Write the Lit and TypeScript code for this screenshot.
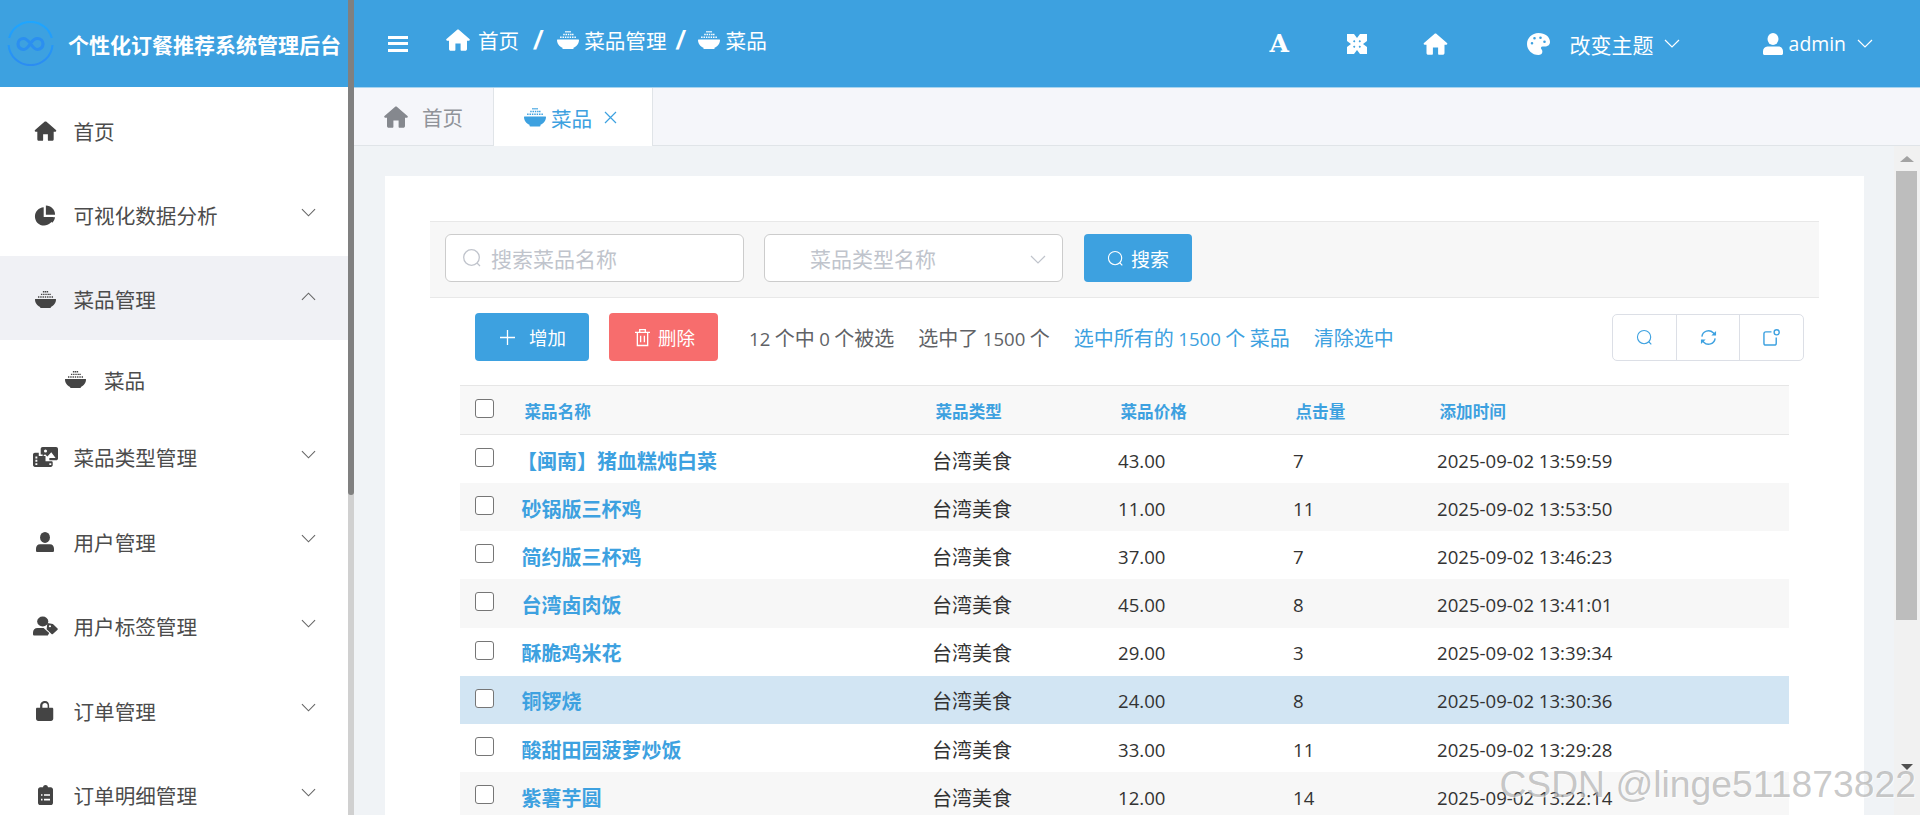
import { LitElement, html, css } from "lit";
import { customElement } from "lit/decorators.js";

const chevron = (up = false) => html`<svg class="chev" viewBox="0 0 16 9" fill="none" stroke="currentColor" stroke-width="1.2"><path d=${up ? "M1 8L8 1l7 7" : "M1 1l7 7 7-7"}/></svg>`;
const home = () => html`<svg class="ic" viewBox="0 0 24 22" fill="currentColor"><path d="M12 .5c.4 0 .8.2 1.100.4L23.500 10c.7.7.3 1.700-.6 1.700H21v8.300c0 1-.8 1.800-1.800 1.800h-3.600c-.6 0-1-.4-1-1v-6.300H9.400v6.300c0 .6-.4 1-1 1H4.800c-1 0-1.800-.8-1.800-1.800v-8.300H1.100c-.9 0-1.300-1-.6-1.700L10.900.9c.3-.2.700-.4 1.100-.4z"/></svg>`;
const bowl = () => html`<svg class="ic" viewBox="0 0 24 20" fill="currentColor">
  <path d="M9 0h1.600v1.600H9zM11.200 0h1.600v1.600h-1.600zM13.400 0h1.600v1.600h-1.600zM6.800 3h1.600v1.600H6.800zM9.300 3h1.600v1.600H9.300zM11.800 3h1.600v1.600h-1.600zM14.300 3h1.600v1.600h-1.600zM16.400 3H18v1.600h-1.600zM3.400 6H5v1.600H3.400zM6 6h1.600v1.600H6zM8.600 6h1.600v1.600H8.600zM11.200 6h1.600v1.600h-1.600zM13.800 6h1.600v1.600h-1.600zM16.400 6H18v1.600h-1.600zM19 6h1.600v1.600H19z"/>
  <path d="M.5 9.200h23c.3 0 .5.200.5.500 0 4-2.600 7.200-6 8.500v.8c0 .6-.4 1-1 1H7c-.6 0-1-.4-1-1v-.8C2.600 16.900 0 13.700 0 9.700c0-.3.200-.5.500-.5z"/></svg>`;
const pie = () => html`<svg class="ic" viewBox="0 0 24 24" fill="currentColor"><path d="M10.500 2.500v11.300h11.200C21 19.500 16.500 23.500 11 23.500 5 23.500.5 18.800.5 13 .5 7.500 4.700 3 10.500 2.500z"/><path d="M13 .5c5.800 0 10.500 4.700 10.500 10.500H13z"/><path d="M14 14h9.500c-.4 2.500-1.500 4.600-3.200 6.300z"/></svg>`;
const gallery = () => html`<svg class="ic" viewBox="0 0 26 21" preserveAspectRatio="none" fill="currentColor"><path fill-rule="evenodd" d="M10 0h14c1.100 0 2 .9 2 2v10c0 1.100-.9 2-2 2h-7v-2.500h6.500L19 5.500l-4 4.500-2.500-2.500L10 10V8H8V2c0-1.100.9-2 2-2zm3 2.500a1.600 1.600 0 1 0 0 3.200 1.600 1.600 0 0 0 0-3.200z"/><path fill-rule="evenodd" d="M2 6h4v3.500h7V15h6c1 0 1.500.6 1.500 1.300V19c0 1.100-.9 2-2 2H2c-1.100 0-2-.9-2-2V8c0-1.100.9-2 2-2zm.500 4v2h2v-2zm0 3.500v2h2v-2zm0 3.500v2h2v-2zm14.500 0v2h2v-2z"/></svg>`;
const user = () => html`<svg class="ic" viewBox="0 0 20 22" preserveAspectRatio="none" fill="currentColor"><ellipse cx="10" cy="6" rx="5.500" ry="6"/><path d="M4.500 13.500h11c2.800 0 4.500 2.200 4.500 4.800v2.200c0 .9-.7 1.500-1.500 1.500h-17C.7 22 0 21.400 0 20.500v-2.200c0-2.600 1.700-4.800 4.500-4.800z"/></svg>`;
const userTag = () => html`<svg class="ic" viewBox="0 0 27 24" preserveAspectRatio="none" fill="currentColor"><circle cx="10.500" cy="6.500" r="6"/><path d="M5 14.500h6.500l3.500 3.500 2.500 2.500-1.500 3H1.500C.6 23.500 0 23 0 22v-2c0-3 2-5.500 5-5.500z"/><path fill-rule="evenodd" d="M15.500 8.500l6 1 5 5.500c.5.500.5 1 0 1.500l-5 5c-.5.500-1 .5-1.500 0l-5.300-5.500zm2.800 2.500a1.200 1.200 0 1 0 0 2.400 1.200 1.200 0 0 0 0-2.400z"/></svg>`;
const bag = () => html`<svg class="ic" viewBox="0 0 24 24" preserveAspectRatio="none" fill="currentColor"><path fill-rule="evenodd" d="M12 0c3.500 0 5.500 2.400 5.500 5.500V8h4c1 0 1.500.7 1.500 1.500V21c0 1.700-1.300 3-3 3H3c-1.700 0-3-1.300-3-3V9.500C0 8.700.5 8 1.500 8h4V5.500C5.500 2.400 8.500 0 12 0zm0 2.500c-2 0-3.500 1.300-3.500 3V8h7V5.500c0-1.700-1.500-3-3.500-3z"/></svg>`;
const clip = () => html`<svg class="ic" viewBox="0 0 20 26" preserveAspectRatio="none" fill="currentColor"><path fill-rule="evenodd" d="M10 0c1.700 0 3 1.100 3.300 3H17c1.700 0 3 1.300 3 3v17c0 1.700-1.300 3-3 3H3c-1.700 0-3-1.300-3-3V6c0-1.700 1.300-3 3-3h3.700C7 1.100 8.300 0 10 0zM4 12v2h2v-2zm4 0v2h8v-2zM4 18v2h2v-2zm4 0v2h8v-2z"/></svg>`;
const search = (cls = "ic") => html`<svg class=${cls} viewBox="0 0 20 20" fill="none" stroke="currentColor" stroke-width="1.300"><circle cx="9.500" cy="9.500" r="7.800"/><path d="M15 15l3 3"/></svg>`;

const MENU = [
  { icon: home, size: "s-home", label: "首页", arrow: false },
  { icon: pie, size: "s-pie", label: "可视化数据分析", arrow: true },
  { icon: bowl, size: "s-bowl", label: "菜品管理", arrow: true, open: true },
  { icon: gallery, size: "s-gal", label: "菜品类型管理", arrow: true },
  { icon: user, size: "s-user", label: "用户管理", arrow: true },
  { icon: userTag, size: "s-tag", label: "用户标签管理", arrow: true },
  { icon: bag, size: "s-bag", label: "订单管理", arrow: true },
  { icon: clip, size: "s-clip", label: "订单明细管理", arrow: true },
];

const ROWS = [
  ["【闽南】猪血糕炖白菜", "43.00", "7", "13:59:59"],
  ["砂锅版三杯鸡", "11.00", "11", "13:53:50"],
  ["简约版三杯鸡", "37.00", "7", "13:46:23"],
  ["台湾卤肉饭", "45.00", "8", "13:41:01"],
  ["酥脆鸡米花", "29.00", "3", "13:39:34"],
  ["铜锣烧", "24.00", "8", "13:30:36"],
  ["酸甜田园菠萝炒饭", "33.00", "11", "13:29:28"],
  ["紫薯芋圆", "12.00", "14", "13:22:14"],
];

@customElement("app-root")
export class AppRoot extends LitElement {
  static styles = css`
    :host { display: flex; position: relative; width: 1920px; height: 815px; overflow: hidden; background: #fff;
      font-family: "Noto Sans CJK SC", "Open Sans", sans-serif; color: #333; }
    * { box-sizing: border-box; }
    svg { display: block; flex: none; }
    .ic { width: 100%; height: 100%; }
    .chev { width: 15px; height: 9px; }
    .n { font-family: "Open Sans", "Noto Sans CJK SC", sans-serif; font-size: 18.6px; }

    .side { width: 354px; flex: none; display: flex; }
    .side-main { width: 348px; flex: none; display: flex; flex-direction: column; }
    .side-bar { width: 6px; flex: none; background: #d0d0d0; }
    .side-thumb { height: 495px; background: #808080; border-radius: 0 0 3px 3px; }
    .logo { height: 87px; flex: none; background: #3da1e0; display: flex; align-items: center; padding-left: 7px; }
    .logo svg { width: 47px; height: 45px; }
    .logo span { margin-left: 14px; color: #fff; font-weight: 700; font-size: 21px; white-space: nowrap; }
    .item { height: 84.4px; flex: none; display: flex; align-items: center; padding: 3px 32px 0 33px; font-size: 20.6px; color: #4c4c4c; }
    .item.open { background: #f0f1f5; }
    .item .i { width: 24px; height: 24px; flex: none; display: flex; align-items: center; justify-content: center; color: #444; margin-right: 16.5px; }
    .item .i .ic { flex: none; }
    .s-home .ic { width: 23px; height: 20px; }
    .s-pie .ic { width: 22px; height: 21px; }
    .s-bowl .ic { width: 21px; height: 17.5px; }
    .s-gal .ic { width: 25px; height: 20px; }
    .s-user .ic { width: 18px; height: 20px; }
    .s-tag .ic { width: 25px; height: 20px; }
    .s-bag .ic { width: 18px; height: 20px; }
    .s-clip .ic { width: 15px; height: 20px; }
    .item .lab { flex: 1; }
    .item .chev { color: #666; margin-bottom: 6px; }
    .sub { height: 73.6px; flex: none; display: flex; align-items: center; padding: 5.5px 0 0 65px; font-size: 20.6px; color: #4c4c4c; }
    .sub .i { width: 21px; height: 17.5px; color: #444; margin-right: 18px; }

    .main { flex: 1; min-width: 0; display: flex; flex-direction: column; }
    .top { height: 87px; flex: none; background: #3da1e0; color: #fff; display: flex; align-items: center; padding-left: 34px; }
    .burger { width: 20px; height: 16px; border-top: 3px solid #fff; border-bottom: 3px solid #fff; display: flex; align-items: center; }
    .burger i { display: block; width: 100%; height: 3px; background: #fff; }
    .crumbs { display: flex; align-items: center; margin-left: 38px; padding-bottom: 7px; font-size: 20.6px; }
    .crumbs .h { width: 24px; height: 22px; margin-right: 8px; }
    .crumbs .b { width: 22px; height: 18.500px; margin-right: 5px; }
    .crumbs .b.b2 { margin-right: 6px; }
    .crumbs .s { font: italic 700 26px "Liberation Sans", sans-serif; margin: 0 14px 0 13px; width: 11px; text-align: center; }
    .crumbs .s.s2 { margin: 0 12px 0 8px; }
    .tools { margin-left: auto; padding-right: 47px; display: flex; align-items: center; font-size: 20px; }
    .tA { font: 700 25px "DejaVu Serif", serif; width: 19px; display: flex; justify-content: center; }
    .t1 { width: 20px; height: 20px; margin-left: 58px; }
    .t2 { width: 25px; height: 22px; margin-left: 56px; }
    .t3 { width: 23px; height: 22px; margin-left: 79px; margin-right: 20px; }
    .ttext { font-size: 21px; margin-right: 10px; white-space: nowrap; }
    .t4 { width: 20px; height: 22px; margin-left: 83px; margin-right: 6px; }
    .adm { font: 19.4px "Open Sans", sans-serif; margin-right: 11px; }
    .tools .chev { width: 16px; }

    .tabs { height: 59px; flex: none; background: #f5f6fa; border-top: 1px solid #a8d4ef; border-bottom: 1px solid #e0e4e8; display: flex; }
    .tab { display: flex; align-items: center; font-size: 20.6px; white-space: nowrap; }
    .tab span { padding-top: 1px; }
    .tab.t-home { width: 140px; padding-left: 30px; color: #909399; border-right: 1px solid #e0e4e8; }
    .tab.t-home .h { width: 24px; height: 22px; margin-right: 14px; color: #85888e; }
    .tab.t-act { width: 159px; height: 59px; padding-left: 30px; background: #fff; color: #3da1e0; border-right: 1px solid #e0e4e8; }
    .tab.t-act .b { width: 22px; height: 18.500px; margin-right: 5px; }
    .tab.t-act .x { width: 13px; height: 13px; margin-left: 12px; }

    .body { flex: 1; min-height: 0; display: flex; background: #f0f3f6; overflow: hidden; }
    .scroll { flex: 1; min-width: 0; padding: 30px 30px 0 31px; }
    .card { background: #fff; height: 100%; padding: 45px 45px 0; }
    .vbar { width: 26px; flex: none; background: #f1f1f1; padding: 10px 3px 0 2px; }
    .arrow-up { width: 0; height: 0; margin: 0 auto; border: 7px solid transparent; border-top: 0; border-bottom: 6px solid #a3a3a3; }
    .vthumb { margin-top: 9px; height: 449px; background: #bdbdbd; }
    .arrow-dn { width: 0; height: 0; margin: 144px auto 0; border: 6px solid transparent; border-bottom: 0; border-top: 6px solid #505050; }

    .filter { height: 77px; background: #f7f7f7; border-top: 1px solid #e8e8e8; border-bottom: 1px solid #e8e8e8; display: flex; align-items: center; padding: 0 0 3px 15px; }
    .inp { width: 299px; height: 48px; border: 1px solid #ccc; border-radius: 6px; background: #fff; display: flex; align-items: center; padding-left: 16px; font-size: 21px; color: #c0c4cc; white-space: nowrap; }
    .inp .si { width: 20px; height: 20px; margin-right: 9px; }
    .sel { margin-left: 20px; padding-left: 45px; padding-right: 16px; }
    .sel span { flex: 1; }
    .sel .chev { width: 16px; margin-top: 2px; }
    .btn { height: 48px; border-radius: 4px; color: #fff; display: flex; align-items: center; justify-content: center; font-size: 19px; white-space: nowrap; flex: none; }
    .b-search { width: 108px; margin-left: 21px; background: #3da1e0; }
    .b-search .si { width: 17px; height: 17px; margin-right: 7px; }
    .bar { display: flex; align-items: center; height: 48px; margin-top: 15px; padding: 0 15px 0 45px; }
    .b-add { width: 114px; background: #3da1e0; justify-content: flex-start; padding-left: 25px; font-size: 18.5px; }
    .b-add svg { width: 15px; height: 15px; margin-right: 14px; }
    .b-del { width: 109px; margin-left: 20px; background: #f76d6d; justify-content: flex-start; padding-left: 26px; font-size: 18.5px; }
    .b-del svg { width: 15px; height: 19px; margin-right: 8px; }
    .st { font-size: 20px; white-space: nowrap; color: #606266; margin-left: 24px; }
    .st.first { margin-left: 31px; }
    .st.lk { color: #3da1e0; }
    .grp { margin-left: auto; width: 192px; height: 47px; border: 1px solid #dcdfe6; border-radius: 5px; display: flex; }
    .grp div { flex: 1; display: flex; align-items: center; justify-content: center; color: #3da1e0; }
    .grp div + div { border-left: 1px solid #dcdfe6; }
    .grp svg { width: 17px; height: 17px; }

    .tbl { margin: 24px 30px 0; }
    .row { display: grid; grid-template-columns: 52px 411px 185px 175px 144px 1fr; height: 48.14px; align-items: center; font-size: 20px; color: #333; }
    .row:nth-child(even) { background: #f7f7f7; }
    .row.sel-row { background: #d2e5f3; }
    .row > span { padding: 2.5px 0 0 10px; white-space: nowrap; }
    .row > span.name { padding-left: 9.500px; }
    .row > span.type { padding-left: 9px; }
    .row > span.bracket { padding-left: 5px; }
    .head { height: 50px; background: #f8f8f8; border-top: 1px solid #e6e6e6; border-bottom: 1px solid #e6e6e6; display: grid; grid-template-columns: 52px 411px 185px 175px 144px 1fr; align-items: center; font-size: 16.6px; font-weight: 700; color: #3da1e0; }
    .head > span { padding: 1px 0 0 12.500px; white-space: nowrap; }
    .cb { width: 19px; height: 19px; margin: 0 0 3px 15px; border: 1.500px solid #767676; border-radius: 3px; background: #fff; }
    .name { font-weight: 700; color: #3da1e0; }

    .wm { position: absolute; right: 4px; top: 764px; font: 37.3px/40px "Liberation Sans", sans-serif; color: rgba(125, 125, 125, .42); text-shadow: 1px 1px 0 rgba(255, 255, 255, .6); white-space: nowrap; pointer-events: none; }
  `;

  render() {
    return html`
      <aside class="side">
        <div class="side-main">
          <div class="logo">
            <svg viewBox="0 0 47 45" fill="none">
              <defs><linearGradient id="lg" x1="0" y1="0" x2="0" y2="1"><stop offset="0" stop-color="#1ea6ff"/><stop offset="1" stop-color="#2b8cf2"/></linearGradient></defs>
              <path d="M2.200 17A22 21.500 0 0 1 44.800 17M45.500 24A22 21.500 0 0 1 1.600 24" stroke="url(#lg)" stroke-width="2.200"/>
              <path d="M23.500 22.500c-2.500-3-4.500-5-7-5a5.500 5.500 0 0 0 0 11c2.500 0 4.500-2 7-6s4.500-5 7-5a5.500 5.500 0 0 1 0 11c-2.500 0-4.500-2-7-6z" stroke="#2b8ff0" stroke-width="3.200"/>
            </svg>
            <span>个性化订餐推荐系统管理后台</span>
          </div>
          ${MENU.map((m) => html`
            <div class="item ${m.open ? "open" : ""}">
              <div class="i ${m.size}">${m.icon()}</div>
              <span class="lab">${m.label}</span>
              ${m.arrow ? chevron(!!m.open) : ""}
            </div>
            ${m.open ? html`<div class="sub"><div class="i">${bowl()}</div><span>菜品</span></div>` : ""}
          `)}
        </div>
        <div class="side-bar"><div class="side-thumb"></div></div>
      </aside>

      <div class="main">
        <header class="top">
          <div class="burger"><i></i></div>
          <nav class="crumbs">
            <div class="h">${home()}</div><span>首页</span>
            <span class="s">/</span>
            <div class="b">${bowl()}</div><span>菜品管理</span>
            <span class="s s2">/</span>
            <div class="b b2">${bowl()}</div><span>菜品</span>
          </nav>
          <div class="tools">
            <span class="tA">A</span>
            <svg class="t1" viewBox="0 0 20 20"><path fill="#fff" d="M0 0h20v20H0z"/><path fill="#3da1e0" d="M7 0l3 4 3-4zM7 20l3-4 3 4zM0 7l4 3-4 3zM20 7l-4 3 4 3zM6 7.200L7.200 6l1.200 1.200L7.200 8.400zM11.600 7.200L12.800 6 14 7.200l-1.200 1.200zM6 12.800l1.200-1.200 1.200 1.200L7.200 14zM11.600 12.800l1.200-1.200 1.200 1.200-1.200 1.200z"/></svg>
            <div class="t2">${home()}</div>
            <svg class="t3" viewBox="0 0 23 22"><path fill="#fff" fill-rule="evenodd" d="M11.500 0C18 0 23 3.800 23 9c0 3-2.500 4.500-5 4.500h-2.500c-1.500 0-2 1.500-1.200 2.500.9 1.100 1.200 2 1 3.200-.3 1.800-1.700 2.800-3.800 2.800C5 22 0 17 0 11S5 0 11.500 0zM5 9a1.300 1.300 0 1 0 0 2.600A1.300 1.300 0 0 0 5 9zm2.500-5a1.300 1.300 0 1 0 0 2.600 1.300 1.300 0 0 0 0-2.600zm6-.5a1.300 1.300 0 1 0 0 2.600 1.300 1.300 0 0 0 0-2.600zm4 4a1.300 1.300 0 1 0 0 2.600 1.300 1.300 0 0 0 0-2.600z"/></svg>
            <span class="ttext">改变主题</span>
            ${chevron()}
            <div class="t4">${user()}</div>
            <span class="adm">admin</span>
            ${chevron()}
          </div>
        </header>

        <div class="tabs">
          <div class="tab t-home"><div class="h">${home()}</div><span>首页</span></div>
          <div class="tab t-act">
            <div class="b">${bowl()}</div><span>菜品</span>
            <svg class="x" viewBox="0 0 13 13" fill="none" stroke="currentColor" stroke-width="1.200"><path d="M1 1l11 11M12 1L1 12"/></svg>
          </div>
        </div>

        <div class="body">
          <div class="scroll">
            <div class="card">
              <div class="filter">
                <div class="inp">${search("si")}<span>搜索菜品名称</span></div>
                <div class="inp sel"><span>菜品类型名称</span>${chevron()}</div>
                <div class="btn b-search">${search("si")}<span>搜索</span></div>
              </div>
              <div class="bar">
                <div class="btn b-add"><svg viewBox="0 0 15 15" stroke="#fff" stroke-width="1.300"><path d="M7.500 0v15M0 7.500h15"/></svg><span>增加</span></div>
                <div class="btn b-del"><svg viewBox="0 0 16 19" fill="none" stroke="#fff" stroke-width="1.400"><path d="M0 4h16M5 4V1h6v3M2.500 4v14h11V4M6 7.500v7M10 7.500v7"/></svg><span>删除</span></div>
                <span class="st first"><span class="n">12</span> 个中 <span class="n">0</span> 个被选</span>
                <span class="st">选中了 <span class="n">1500</span> 个</span>
                <span class="st lk">选中所有的 <span class="n">1500</span> 个 菜品</span>
                <span class="st lk">清除选中</span>
                <div class="grp">
                  <div>${search("")}</div>
                  <div><svg viewBox="0 0 18 18" fill="none" stroke="currentColor" stroke-width="1.500"><path d="M2 8a7 7 0 0 1 12-4l2 2M16 10a7 7 0 0 1-12 4l-2-2"/><path fill="currentColor" stroke="none" d="M12 7h5V2zM6 11H1v5z"/></svg></div>
                  <div><svg viewBox="0 0 18 18" fill="none" stroke="currentColor" stroke-width="1.500"><path d="M9 3H3a2 2 0 0 0-2 2v10a2 2 0 0 0 2 2h9a2 2 0 0 0 2-2V9"/><circle cx="14.500" cy="3.500" r="2.700"/></svg></div>
                </div>
              </div>
              <div class="tbl">
                <div class="head">
                  <div class="cb"></div>
                  <span>菜品名称</span><span>菜品类型</span><span>菜品价格</span><span>点击量</span><span>添加时间</span>
                </div>
                <div class="rows">
                  ${ROWS.map((r, i) => html`
                    <div class="row ${i === 5 ? "sel-row" : ""}">
                      <div class="cb"></div>
                      <span class="name ${i === 0 ? "bracket" : ""}">${r[0]}</span>
                      <span class="type">台湾美食</span>
                      <span class="n">${r[1]}</span>
                      <span class="n">${r[2]}</span>
                      <span class="n">2025-09-02 ${r[3]}</span>
                    </div>
                  `)}
                </div>
              </div>
            </div>
          </div>
          <div class="vbar">
            <div class="arrow-up"></div>
            <div class="vthumb"></div>
            <div class="arrow-dn"></div>
          </div>
        </div>
      </div>
      <div class="wm">CSDN @linge511873822</div>
    `;
  }
}
